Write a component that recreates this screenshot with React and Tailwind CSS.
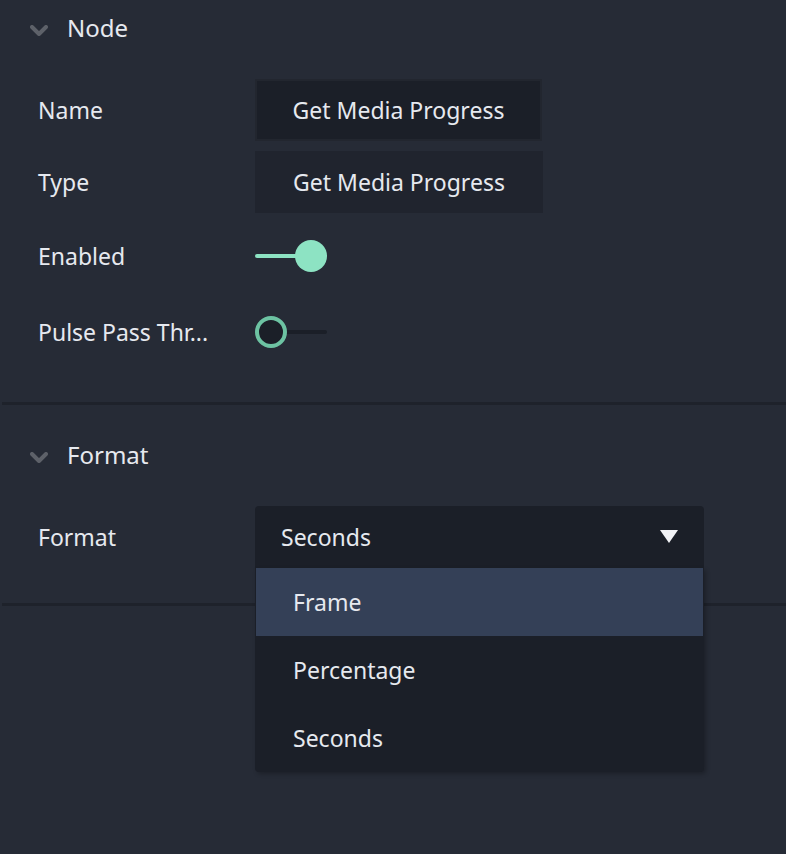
import React from "react";

function Chevron() {
  return (
    <svg width="20" height="14" viewBox="0 0 20 14" className="blur-[0.7px]">
      <path d="M3 4 L10 11 L17 4" fill="none" stroke="#5d6169" strokeWidth="4" strokeLinecap="round" strokeLinejoin="round" />
    </svg>
  );
}

function SectionHeader({ title }) {
  return (
    <div className="flex h-[56px] items-center">
      <div className="ml-[29px] flex w-[38px] items-center pt-[4px]">
        <Chevron />
      </div>
      <span className="text-[24px] text-[#e6e9ef]">{title}</span>
    </div>
  );
}

function Row({ label, h, children }) {
  return (
    <div className={`flex items-center ${h}`}>
      <div className="w-[255px] shrink-0 pl-[38px] text-[23px] text-[#e6e9ef] whitespace-nowrap">{label}</div>
      {children}
    </div>
  );
}

export default function App() {
  return (
    <div
      className="h-[854px] w-[786px] bg-[#262b36] overflow-hidden"
      style={{ fontFamily: '"Noto Sans", sans-serif' }}
    >
      {/* Node section */}
      <div className="flex flex-col">
        <SectionHeader title="Node" />
        <div className="h-[18px]" />
        <Row label="Name" h="h-[72px]">
          <div className="flex h-[62px] w-[287px] items-center justify-center border-2 border-[#22262f] bg-[#1b1f28] text-[23px] text-[#e6e9ef]">
            Get Media Progress
          </div>
        </Row>
        <Row label="Type" h="h-[72px]">
          <div className="flex h-[62px] w-[288px] items-center justify-center bg-[#20242e] text-[23px] text-[#e6e9ef]">
            Get Media Progress
          </div>
        </Row>
        <Row label="Enabled" h="h-[76px]">
          <div className="relative h-[32px] w-[72px]">
            <div className="absolute left-0 top-[14px] h-[4px] w-[50px] rounded-full bg-[#8de3c3]" />
            <div className="absolute left-[40px] top-0 h-[32px] w-[32px] rounded-full bg-[#8de3c3]" />
          </div>
        </Row>
        <Row label="Pulse Pass Thr..." h="h-[76px]">
          <div className="relative h-[32px] w-[72px]">
            <div className="absolute left-[20px] top-[14px] h-[4px] w-[52px] rounded-full bg-[#1b1f28]" />
            <div className="absolute left-0 top-0 h-[32px] w-[32px] rounded-full border-[4px] border-[#6dc3a3] bg-[#1b1f28]" />
          </div>
        </Row>
        <div className="h-[32px]" />
      </div>
      <div className="ml-[2px] h-[3px] bg-[#1e222b]" />

      {/* Format section */}
      <div className="flex flex-col">
        <div className="h-[22px]" />
        <SectionHeader title="Format" />
        <div className="h-[22px]" />
        <Row label="Format" h="h-[64px]">
          <div className="relative h-[62px] w-[449px]">
            <div className="flex h-[62px] items-center justify-between rounded-t-[4px] bg-[#1b1f28] pl-[26px] pr-[26px] text-[23px] text-[#e6e9ef]">
              <span>Seconds</span>
              <svg width="18" height="14" viewBox="0 0 18 14">
                <path d="M0 0 L18 0 L9 13 Z" fill="#f2f3f6" />
              </svg>
            </div>
            <div className="absolute left-0 top-[62px] z-10 w-[449px] rounded-b-[4px] bg-[#1b1f28] shadow-[2px_2px_4px_rgba(0,0,0,0.25)]">
              <div className="mx-[1px] flex h-[68px] items-center bg-[#344057] pl-[37px] text-[23px] text-[#e6e9ef]">Frame</div>
              <div className="flex h-[68px] items-center pl-[38px] text-[23px] text-[#e6e9ef]">Percentage</div>
              <div className="flex h-[68px] items-center pl-[38px] text-[23px] text-[#e6e9ef]">Seconds</div>
            </div>
          </div>
        </Row>
        <div className="h-[34px]" />
      </div>
      <div className="ml-[2px] h-[3px] bg-[#1e222b]" />
    </div>
  );
}
